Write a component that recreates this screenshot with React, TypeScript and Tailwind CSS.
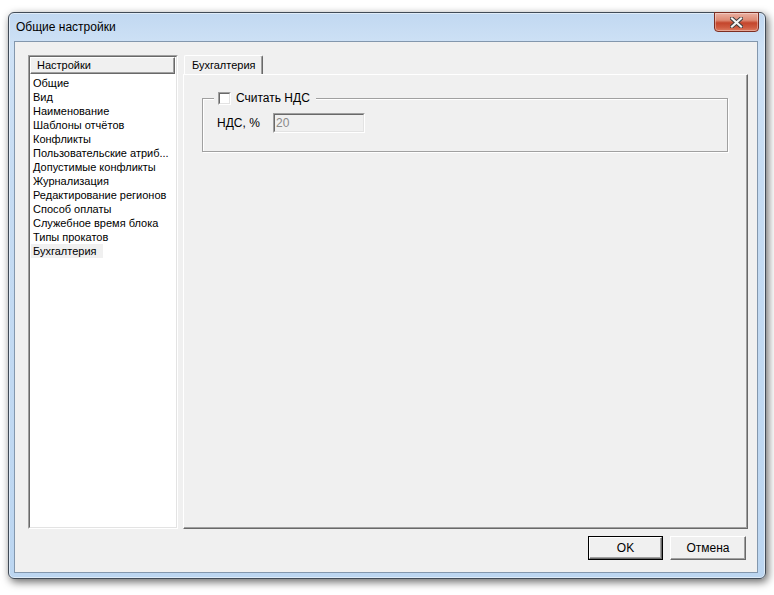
import React from 'react';

const items = [
  'Общие',
  'Вид',
  'Наименование',
  'Шаблоны отчётов',
  'Конфликты',
  'Пользовательские атриб...',
  'Допустимые конфликты',
  'Журнализация',
  'Редактирование регионов',
  'Способ оплаты',
  'Служебное время блока',
  'Типы прокатов',
  'Бухгалтерия',
];

const CloseButton: React.FC = () => (
  <div className="-mt-[1px] mr-[6px] flex h-[20px] w-[45px] items-center justify-center rounded-b-[4px] border border-[#7d2e22] bg-[linear-gradient(180deg,#eab0a2_0%,#de8a74_40%,#c4452c_55%,#cf5b41_80%,#dd7c61_100%)] shadow-[inset_0_0_0_1px_rgba(255,255,255,0.35)]">
    <svg width="13" height="11" viewBox="0 0 13 11">
      <path d="M2 1.5 L11 9.5 M11 1.5 L2 9.5" stroke="#3b3b3b" strokeWidth="4" strokeLinecap="square" fill="none" />
      <path d="M2 1.5 L11 9.5 M11 1.5 L2 9.5" stroke="#f4f4f4" strokeWidth="2.2" strokeLinecap="square" fill="none" />
    </svg>
  </div>
);

const SettingsList: React.FC = () => (
  <div className="h-[474px] w-[150px] border border-t-[#a0a0a0] border-l-[#a0a0a0] border-r-white border-b-white">
    <div className="h-full w-full border border-t-[#696969] border-l-[#696969] border-r-[#e3e3e3] border-b-[#e3e3e3] bg-white">
      <div className="flex h-[17px] w-[145px] items-center border border-t-white border-l-white border-r-[#696969] border-b-[#696969] bg-[#f0f0f0] pl-[6px] shadow-[inset_-1px_-1px_0_#a0a0a0]">
        Настройки
      </div>
      <div className="flex flex-col items-start pl-[1px] pt-[2px]">
        {items.map((it, i) => (
          <div
            key={it}
            className={`h-[14px] px-[2px] leading-[14px] whitespace-nowrap ${i === items.length - 1 ? 'bg-[#f0f0f0] w-[72px]' : ''}`}
          >
            {it}
          </div>
        ))}
      </div>
    </div>
  </div>
);

const TabPanel: React.FC = () => (
  <div className="flex h-[474px] w-[565px] flex-col">
    <div className="flex h-[19px] items-end">
      <div className="ml-[1px] flex h-[19px] w-[79px] items-center rounded-t-[2px] border-l border-t border-r border-l-white border-t-white border-r-[#696969] bg-[#f0f0f0] pl-[7px] shadow-[inset_-1px_0_0_#a0a0a0]">
        Бухгалтерия
      </div>
    </div>
    <div className="flex-1 border border-t-white border-l-white border-r-[#696969] border-b-[#696969] bg-[#f0f0f0] px-[18px] pt-[16px] shadow-[inset_-1px_-1px_0_#a0a0a0]">
      <fieldset className="mr-[1px] border border-[#a0a0a0] pb-[18px] pl-[14px] pt-[8px] shadow-[inset_1px_1px_0_white,1px_1px_0_white]">
        <legend className="-ml-[3px] flex h-[14px] items-center bg-[#f0f0f0] pl-[4px] pr-[6px]">
          <span className="mr-[5px] inline-block h-[13px] w-[13px] border border-t-[#a0a0a0] border-l-[#a0a0a0] border-r-white border-b-white">
            <span className="block h-full w-full border border-t-[#696969] border-l-[#696969] border-r-[#e3e3e3] border-b-[#e3e3e3] bg-white" />
          </span>
          <span className="text-[12px]">Считать НДС</span>
        </legend>
        <div className="flex items-center">
          <span className="w-[56px] text-[12px]">НДС, %</span>
          <div className="h-[20px] w-[92px] border border-t-[#a0a0a0] border-l-[#a0a0a0] border-r-white border-b-white">
            <div className="flex h-full w-full items-center border border-t-[#696969] border-l-[#696969] border-r-[#e3e3e3] border-b-[#e3e3e3] bg-[#f0f0f0] pl-[1px] text-[12px] text-[#8a8a8a]">
              20
            </div>
          </div>
        </div>
      </fieldset>
    </div>
  </div>
);

export default function App() {
  return (
    <div className="h-[595px] w-[774px] bg-white pl-[8px] pt-[12px] font-['Liberation_Sans',Arial,sans-serif] text-[11px] text-black">
      <div className="flex h-[567px] w-[758px] flex-col rounded-[6px] border border-[#414b57] bg-[linear-gradient(180deg,#c1d8f1_0%,#cfe2f6_6%,#c6dcf3_30%,#bcd6f1_100%)] shadow-[2px_3px_9px_rgba(0,0,0,0.6),inset_0_0_0_1px_rgba(255,255,255,0.5)]">
        <div className="flex h-[28px] items-start justify-between">
          <div className="pl-[7px] pt-[7px] text-[12px] leading-[15px] text-black">Общие настройки</div>
          <CloseButton />
        </div>
        <div className="ml-[5px] h-[532px] w-[744px] border border-[#8397ad] bg-[#f0f0f0]">
          <div className="flex gap-[5px] pl-[13px] pt-[13px]">
            <SettingsList />
            <TabPanel />
          </div>
          <div className="mt-[7px] flex justify-end gap-[7px] pr-[11px]">
            <div className="h-[24px] w-[75px] border border-black">
              <div className="flex h-full w-full items-center justify-center border border-t-white border-l-white border-r-[#696969] border-b-[#696969] bg-[#f0f0f0] text-[12px] shadow-[inset_-1px_-1px_0_#a0a0a0]">
                OK
              </div>
            </div>
            <div className="flex h-[24px] w-[76px] items-center justify-center border border-t-white border-l-white border-r-[#696969] border-b-[#696969] bg-[#f0f0f0] text-[12px] shadow-[inset_-1px_-1px_0_#a0a0a0]">
              Отмена
            </div>
          </div>
        </div>
      </div>
    </div>
  );
}
